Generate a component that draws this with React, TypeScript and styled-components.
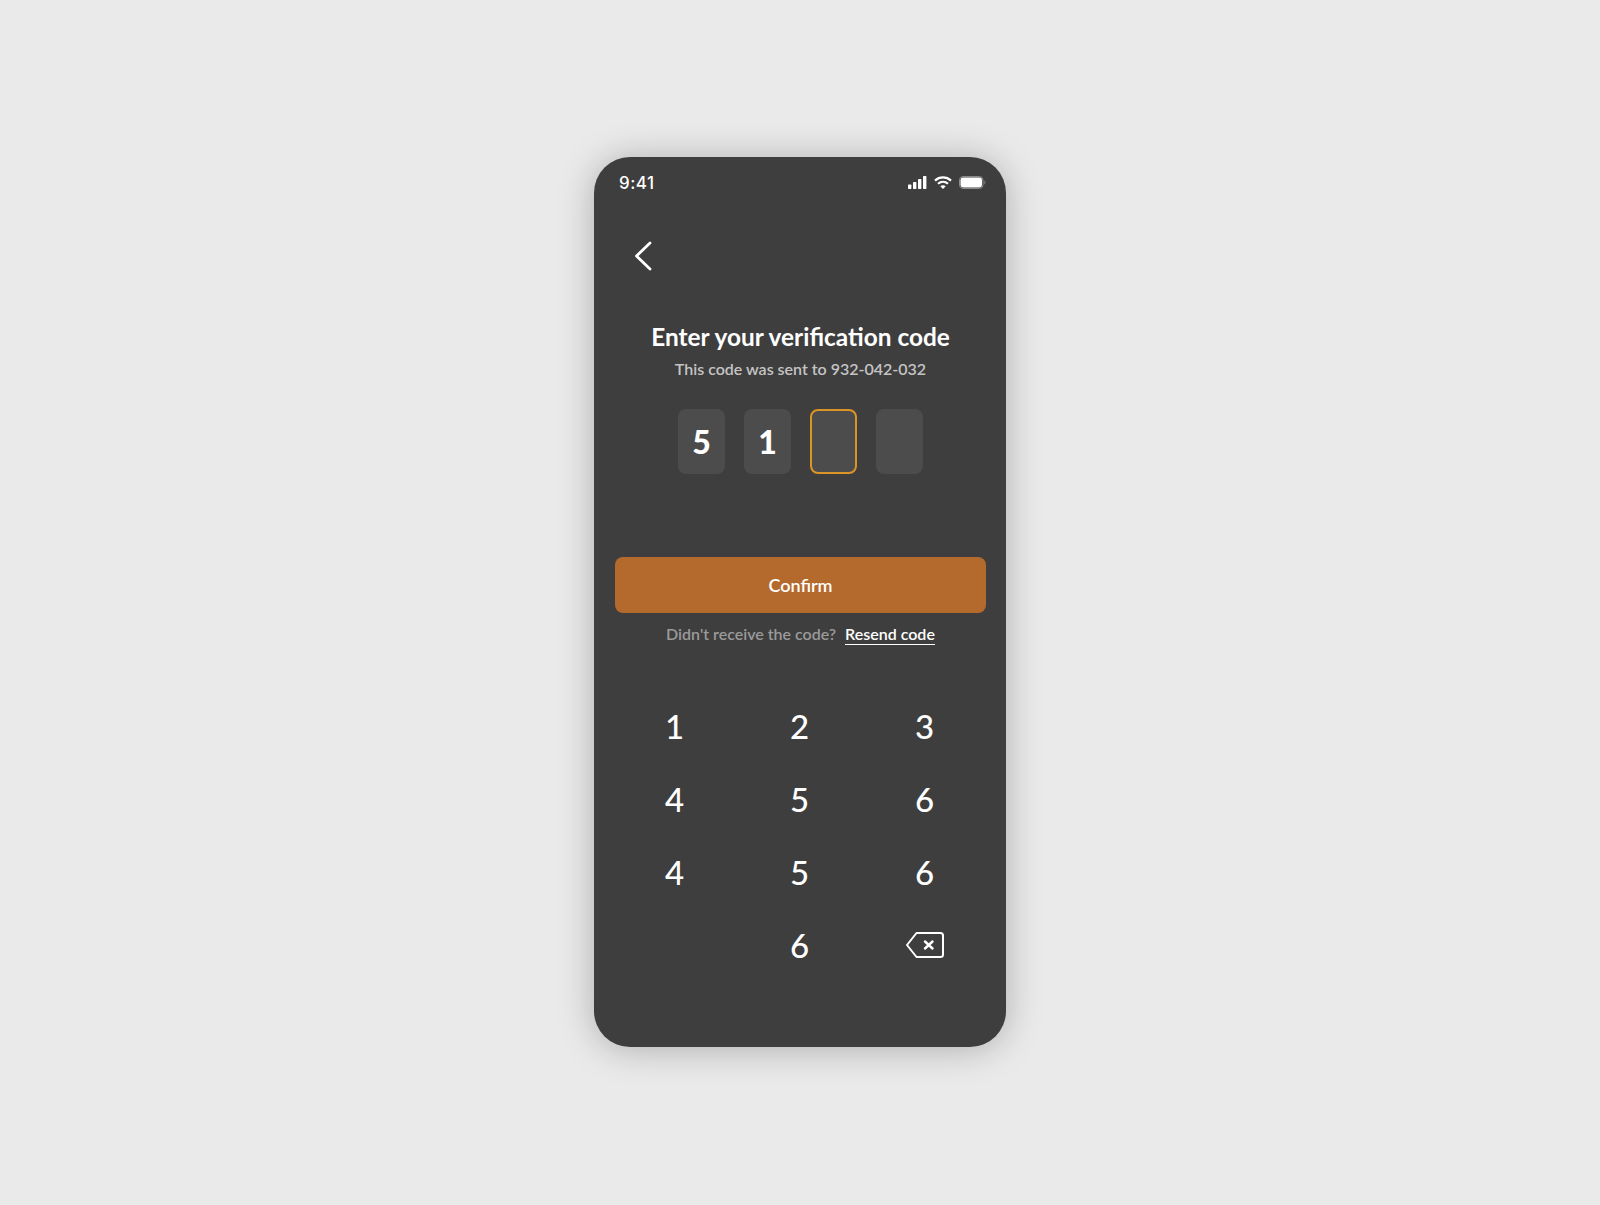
import React from 'react'
import styled, { createGlobalStyle } from 'styled-components'

const GlobalStyle = createGlobalStyle`
  html, body {
    margin: 0;
    padding: 0;
    background: #eaeaea;
  }
  * {
    box-sizing: border-box;
  }
`

const Page = styled.div`
  width: 1600px;
  height: 1205px;
  padding-top: 157px;
  display: flex;
  justify-content: center;
  background: #eaeaea;
  overflow: hidden;
`

const Phone = styled.div`
  width: 412px;
  height: 890px;
  padding: 0 20px 0 21px;
  display: flex;
  flex-direction: column;
  align-items: center;
  border-radius: 36px;
  background: #3e3e3e;
  box-shadow: 0 2px 36px rgba(0, 0, 0, 0.26);
  font-family: Lato, 'Noto Sans', sans-serif;
  color: #fff;
`

const StatusBar = styled.div`
  width: 100%;
  height: 20px;
  margin-top: 16px;
  padding: 0 0 2px 4px;
  display: flex;
  align-items: center;
  justify-content: space-between;
`

const Time = styled.span`
  margin-top: 2px;
  font-family: Inter, sans-serif;
  font-size: 17px;
  font-weight: 500;
  letter-spacing: 0.5px;
`

const StatusIcons = styled.div`
  display: flex;
  align-items: center;
  gap: 6px;
`

const BackButton = styled.div`
  align-self: flex-start;
  margin: 48px 0 0 19px;
  height: 30px;
`

const Title = styled.h1`
  margin: 51px 0 0;
  font-size: 24.4px;
  line-height: 30px;
  font-weight: 700;
`

const Subtitle = styled.p`
  margin: 5px 0 0;
  font-size: 16px;
  line-height: 24px;
  font-weight: 600;
  color: #c4c4c4;
`

const CodeRow = styled.div`
  margin-top: 28px;
  display: flex;
  gap: 19px;
`

const CodeBox = styled.div<{ $active: boolean }>`
  width: 47px;
  height: 65px;
  display: flex;
  align-items: center;
  justify-content: center;
  border-radius: 8px;
  background: #4c4c4c;
  border: ${({ $active }) => ($active ? '2px solid #dc9426' : 'none')};
  font-size: 32px;
  font-weight: 900;
`

const ConfirmButton = styled.div`
  width: 371px;
  height: 56px;
  margin-top: 83px;
  display: flex;
  align-items: center;
  justify-content: center;
  border-radius: 8px;
  background: #b46a2c;
  font-size: 18px;
  font-weight: 600;
`

const ResendRow = styled.div`
  margin-top: 10px;
  display: flex;
  gap: 9px;
  font-size: 16px;
  line-height: 21px;
  font-weight: 600;
  color: #9a9a9a;
`

const ResendLink = styled.span`
  color: #fff;
  border-bottom: 1px solid #fff;
`

const Keypad = styled.div`
  width: 375px;
  margin: 44px 0 0 -2px;
  display: grid;
  grid-template-columns: repeat(3, 125px);
  grid-auto-rows: 73px;
`

const Key = styled.div`
  display: flex;
  align-items: center;
  justify-content: center;
  font-size: 33px;
  font-weight: 500;
`

const code = ['5', '1', '', '']
const keys = ['1', '2', '3', '4', '5', '6', '4', '5', '6', '', '6', 'del']

function SignalIcon() {
  return (
    <svg width="20" height="13" viewBox="0 0 20 13" fill="#fff">
      <rect x="0" y="8.500" width="3.400" height="4.500" rx="0.7" />
      <rect x="5" y="6" width="3.400" height="7" rx="0.7" />
      <rect x="10" y="3" width="3.400" height="10" rx="0.7" />
      <rect x="15" y="0" width="3.400" height="13" rx="0.7" />
    </svg>
  )
}

function WifiIcon() {
  return (
    <svg width="18" height="13" viewBox="0 0 18 13" fill="none" stroke="#fff" strokeWidth="2.200">
      <path d="M1 4.600C5.500 0.400 12.500 0.400 17 4.600" />
      <path d="M4 7.800C6.900 5.100 11.100 5.100 14 7.800" />
      <path d="M9 13L6.300 10.200C7.900 8.800 10.100 8.800 11.700 10.200Z" fill="#fff" stroke="none" />
    </svg>
  )
}

function BatteryIcon() {
  return (
    <svg width="28" height="13" viewBox="-1 0 28 13">
      <rect x="0.500" y="0.500" width="23.500" height="12" rx="3.500" fill="none" stroke="#8a8a8a" />
      <rect x="1.500" y="1.500" width="21.500" height="10" rx="2.400" fill="#fff" />
      <path d="M25.200 4.500v4c.8-.3 1.300-1.100 1.300-2s-.5-1.700-1.300-2z" fill="#777" />
    </svg>
  )
}

function BackIcon() {
  return (
    <svg width="18" height="30" viewBox="0 0 18 30" fill="none" stroke="#fff" strokeWidth="2.800" strokeLinecap="round" strokeLinejoin="round">
      <path d="M16 2L2.500 15L16 28" />
    </svg>
  )
}

function DeleteIcon() {
  return (
    <svg width="38" height="26" viewBox="0 0 38 26" fill="none" stroke="#fff" strokeWidth="2" strokeLinejoin="round" strokeLinecap="round">
      <path d="M10.500 1H34.500C36 1 37 2 37 3.500V22.500C37 24 36 25 34.500 25H10.500L1 13Z" />
      <path d="M19 9.500L26.500 16.500M26.500 9.500L19 16.500" strokeWidth="2.400" />
    </svg>
  )
}

export default function App() {
  return (
    <>
      <GlobalStyle />
      <Page>
        <Phone>
          <StatusBar>
            <Time>9:41</Time>
            <StatusIcons>
              <SignalIcon />
              <WifiIcon />
              <BatteryIcon />
            </StatusIcons>
          </StatusBar>

          <BackButton>
            <BackIcon />
          </BackButton>

          <Title>Enter your verification code</Title>
          <Subtitle>This code was sent to 932-042-032</Subtitle>

          <CodeRow>
            {code.map((digit, i) => (
              <CodeBox key={i} $active={i === 2}>
                {digit}
              </CodeBox>
            ))}
          </CodeRow>

          <ConfirmButton>Confirm</ConfirmButton>

          <ResendRow>
            <span>Didn't receive the code?</span>
            <ResendLink>Resend code</ResendLink>
          </ResendRow>

          <Keypad>
            {keys.map((key, i) => (
              <Key key={i}>{key === 'del' ? <DeleteIcon /> : key}</Key>
            ))}
          </Keypad>
        </Phone>
      </Page>
    </>
  )
}
